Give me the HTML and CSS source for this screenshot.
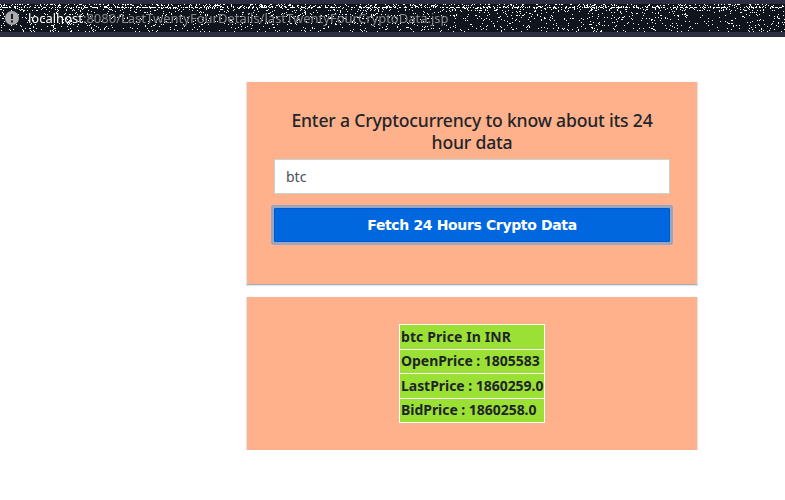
FILE: index.html
```html
<!DOCTYPE html>
<html lang="en">
<head>
<meta charset="utf-8">
<title>24 Hour Crypto Data</title>
<link rel="stylesheet" href="styles.css">
</head>
<body>
<header class="address-bar">
  <canvas class="specks" width="785" height="37"></canvas>
  <svg class="info" viewBox="0 0 14 14"><circle cx="7" cy="7" r="7" fill="#a9a9ad"/><path d="M7 3v5M7 9.5v2" stroke="#17191f" stroke-width="2"/></svg>
  <span class="url"><span class="host">localhost</span><span class="path">:8080/LastTwentyFourDetails/lastTwentyFourCryptoData.jsp</span></span>
</header>
<main class="content">
  <form class="card search">
    <h1 class="heading">Enter a Cryptocurrency to know about its 24 hour data</h1>
    <input class="field" type="text" value="btc">
    <button class="submit" type="button">Fetch 24 Hours Crypto Data</button>
  </form>
  <section class="card result">
    <table class="prices">
      <tr><th class="title">btc Price In INR</th></tr>
      <tr><td>OpenPrice : 1805583</td></tr>
      <tr><td>LastPrice : 1860259.0</td></tr>
      <tr><td>BidPrice : 1860258.0</td></tr>
    </table>
  </section>
</main>
<script src="specks.js"></script>
</body>
</html>
```
FILE: styles.css
```css
* { box-sizing: border-box; }
body { margin: 0; background: #fff; color: #212529; font-family: "Noto Sans", sans-serif; }
.address-bar { position: relative; height: 37px; display: flex; align-items: center; padding-left: 5px; background: #10151d; border-top: 4px solid #2e2e43; border-bottom: 5px solid #2e2e43; }
.specks { position: absolute; left: 0; top: -4px; }
.info { position: relative; width: 14px; height: 14px; flex: none; }
.url { position: relative; margin-left: 9px; font-size: 13px; line-height: 18px; white-space: nowrap; }
.host { color: #fff; }
.path { color: #85878d; }
.content { width: 450px; margin: 45px 0 0 247px; display: flex; flex-direction: column; gap: 13px; }
.card { background: #ffb18c; box-shadow: 0 1px 0 #a3adb5, 0 1px 1px 1px #e3e5ec; }
.search { height: 202px; padding: 27px 27px 0; }
.heading { margin: 0; padding: 0 13px; font-size: 17.6px; line-height: 22px; font-weight: 500; letter-spacing: -0.19px; text-align: center; height: 50px; }
.field { display: block; width: 396px; height: 35px; padding: 0 11px; border: 1px solid #c9d2cf; color: #495057; font: 14px "Noto Sans", sans-serif; }
.submit { display: block; width: 396px; height: 34px; margin-top: 14px; padding: 0 0 1px; border: 1px solid #0058cf; background: #0067df; border-radius: 1px; box-shadow: 0 0 0 3px #98a5c3; color: #fff; font: bold 14px/20px "DejaVu Sans", sans-serif; letter-spacing: -0.36px; }
.result { height: 153px; padding-top: 27px; }
.prices { width: 146px; margin: 0 auto 0 152px; border-collapse: collapse; background: #9be135; font-size: 14px; font-weight: bold; letter-spacing: -0.04px; }
.prices th, .prices td { height: 24.5px; padding: 0 1px; border: 1px solid #fff; text-align: left; line-height: 20px; white-space: nowrap; }
.prices .title { letter-spacing: 0.1px; }
```
FILE: specks.js
```js
const ctx = document.querySelector(".specks").getContext("2d");
let seed = 17;
const random = () => (seed = (seed * 16807) % 2147483647) / 2147483647;
ctx.fillStyle = "#fff";
for (let y = 4; y < 32; y++) {
  const density = y < 7 ? 0.2 : y === 7 ? 0.5 : y < 11 ? 0.12 : 0.07;
  for (let x = 0; x < 785; x++) {
    if (random() < density) ctx.fillRect(x, y, 1, 1);
  }
}
```
